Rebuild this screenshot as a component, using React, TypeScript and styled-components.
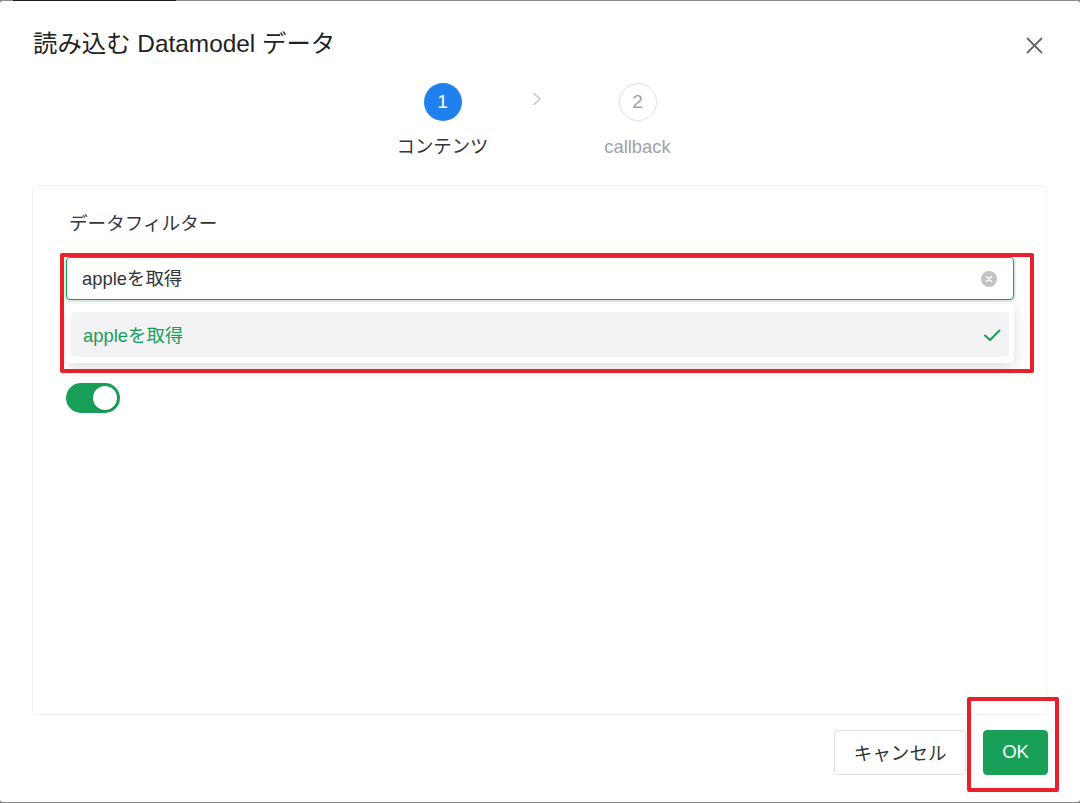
import React from "react";
import styled, { createGlobalStyle } from "styled-components";

const GlobalStyle = createGlobalStyle`
  html, body {
    margin: 0;
    padding: 0;
    background: #8c8c8c;
  }
  body {
    font-family: "Liberation Sans", "Noto Sans CJK JP", sans-serif;
    color: #333639;
  }
  * { box-sizing: border-box; }
`;

const Page = styled.div`
  width: 1080px;
  height: 803px;
  display: flex;
  flex-direction: column;
  overflow: hidden;
`;

const EdgeStrip = styled.div`
  height: 1px;
  flex: none;
  display: flex;
  background: #8c8c8c;
`;

const EdgeDark = styled.div<{ $left: number; $width: number }>`
  margin-left: ${(p) => p.$left}px;
  width: ${(p) => p.$width}px;
  background: #1d1d24;
`;

const Dialog = styled.div`
  position: relative;
  height: 801px;
  flex: none;
  background: #ffffff;
  border-radius: 3px;
  display: flex;
  flex-direction: column;
`;

const Header = styled.div`
  display: flex;
  align-items: center;
  justify-content: space-between;
  padding: 27px 37px 0 33px;
`;

const Title = styled.div`
  font-size: 24.4px;
  line-height: 31px;
  color: #1f2225;
`;

const CloseButton = styled.div`
  width: 18px;
  height: 18px;
  display: flex;
  align-items: center;
  justify-content: center;
  margin-top: 3px;
`;

const Steps = styled.div`
  display: flex;
  justify-content: center;
  margin-top: 24px;
`;

const Step = styled.div`
  width: 120px;
  display: flex;
  flex-direction: column;
  align-items: center;
`;

const StepCircle = styled.div<{ $active?: boolean }>`
  width: 38px;
  height: 38px;
  border-radius: 50%;
  display: flex;
  align-items: center;
  justify-content: center;
  font-size: 19px;
  background: ${(p) => (p.$active ? "#2080f0" : "#ffffff")};
  color: ${(p) => (p.$active ? "#ffffff" : "#9ea1a6")};
  border: ${(p) => (p.$active ? "none" : "1px solid #e0e0e6")};
`;

const StepLabel = styled.div<{ $active?: boolean }>`
  margin-top: 14px;
  font-size: 18.4px;
  line-height: 24px;
  color: ${(p) => (p.$active ? "#333639" : "#a0a3a8")};
`;

const StepSeparator = styled.div`
  width: 75px;
  height: 38px;
  display: flex;
  justify-content: center;
  align-items: flex-start;
  padding-top: 9px;
  padding-right: 6px;
`;

const Card = styled.div`
  flex: 1;
  margin: 26px 33px 0 32px;
  border: 1px solid #efeff5;
  border-radius: 4px;
  padding: 25px 32px 0 33px;
  display: flex;
  flex-direction: column;
`;

const FieldLabel = styled.div`
  font-size: 18.6px;
  line-height: 26px;
  padding-left: 3px;
  color: #333639;
`;

const SelectWrap = styled.div`
  position: relative;
  margin-top: 20px;
`;

const SelectInput = styled.div`
  height: 43px;
  border: 1px solid #18a058;
  border-radius: 4px;
  box-shadow: 0 0 0 2px rgba(24, 160, 88, 0.16);
  display: flex;
  align-items: center;
  justify-content: space-between;
  padding: 0 16px 3px 15px;
  font-size: 18.4px;
  color: #333639;
`;

const ClearIcon = styled.div`
  width: 16px;
  height: 16px;
  border-radius: 50%;
  background: #c2c2c2;
  display: flex;
  align-items: center;
  justify-content: center;
  margin-top: 3px;
`;

const Dropdown = styled.div`
  position: absolute;
  left: 0;
  right: 0;
  top: 47px;
  background: #ffffff;
  border-radius: 4px;
  padding: 8px 5px 6px 5px;
  box-shadow: 0 3px 14px rgba(0, 0, 0, 0.1), 0 6px 24px rgba(0, 0, 0, 0.05);
  z-index: 2;
`;

const Option = styled.div<{ $selected?: boolean }>`
  height: 45px;
  border-radius: 4px;
  background: #f3f3f5;
  display: flex;
  align-items: center;
  justify-content: space-between;
  padding: 0 7px 2px 12px;
  font-size: 18.4px;
  color: ${(p) => (p.$selected ? "#18a058" : "#333639")};
  svg { margin-top: 2px; }
`;

const SwitchRow = styled.div`
  margin-top: 83px;
  display: flex;
`;

const SwitchRail = styled.div<{ $on?: boolean }>`
  width: 54px;
  height: 30px;
  border-radius: 15px;
  background: ${(p) => (p.$on ? "#18a058" : "#dbdbdb")};
  display: flex;
  align-items: center;
  justify-content: ${(p) => (p.$on ? "flex-end" : "flex-start")};
  padding: 0 3px;
`;

const SwitchKnob = styled.div`
  width: 24px;
  height: 24px;
  border-radius: 50%;
  background: #ffffff;
  box-shadow: 0 1px 3px rgba(0, 0, 0, 0.2);
`;

const Footer = styled.div`
  display: flex;
  justify-content: flex-end;
  gap: 17px;
  padding: 15px 32px 27px 0;
`;

const Button = styled.div<{ $primary?: boolean }>`
  height: 45px;
  padding: 0 ${(p) => (p.$primary ? "18px" : "18.5px")} 2px;
  border-radius: 4px;
  display: flex;
  align-items: center;
  justify-content: center;
  font-size: 18.6px;
  background: ${(p) => (p.$primary ? "#18a058" : "#ffffff")};
  color: ${(p) => (p.$primary ? "#ffffff" : "#333639")};
  border: 1px solid ${(p) => (p.$primary ? "#18a058" : "#e0e0e6")};
`;

const Annotation = styled.div`
  position: absolute;
  border: 4px solid #e8202b;
  border-radius: 2px;
  pointer-events: none;
  z-index: 5;
`;

export default function App() {
  return (
    <Page>
      <GlobalStyle />
      <EdgeStrip>
        <EdgeDark $left={13} $width={163} />
      </EdgeStrip>
      <Dialog>
        <Header>
          <Title>読み込む Datamodel データ</Title>
          <CloseButton>
            <svg width="17" height="17" viewBox="0 0 17 17">
              <path d="M1.5 1.5 L15.5 15.5 M15.5 1.5 L1.5 15.5" stroke="#666" strokeWidth="1.8" strokeLinecap="round" />
            </svg>
          </CloseButton>
        </Header>
        <Steps>
          <Step>
            <StepCircle $active>1</StepCircle>
            <StepLabel $active>コンテンツ</StepLabel>
          </Step>
          <StepSeparator>
            <svg width="10" height="14" viewBox="0 0 10 14">
              <path d="M2 1.5 L8 7 L2 12.5" stroke="#c4c5c8" strokeWidth="1.6" fill="none" strokeLinecap="round" strokeLinejoin="round" />
            </svg>
          </StepSeparator>
          <Step>
            <StepCircle>2</StepCircle>
            <StepLabel>callback</StepLabel>
          </Step>
        </Steps>
        <Card>
          <FieldLabel>データフィルター</FieldLabel>
          <SelectWrap>
            <SelectInput>
              <span>appleを取得</span>
              <ClearIcon>
                <svg width="8" height="8" viewBox="0 0 8 8">
                  <path d="M1.5 1.5 L6.5 6.5 M6.5 1.5 L1.5 6.5" stroke="#fff" strokeWidth="1.5" strokeLinecap="round" />
                </svg>
              </ClearIcon>
            </SelectInput>
            <Dropdown>
              <Option $selected>
                <span>appleを取得</span>
                <svg width="20" height="20" viewBox="0 0 20 20">
                  <path d="M3 10.5 L8 15 L17.5 5.5" stroke="#18a058" strokeWidth="2" fill="none" strokeLinecap="round" strokeLinejoin="round" />
                </svg>
              </Option>
            </Dropdown>
          </SelectWrap>
          <SwitchRow>
            <SwitchRail $on>
              <SwitchKnob />
            </SwitchRail>
          </SwitchRow>
        </Card>
        <Footer>
          <Button>キャンセル</Button>
          <Button $primary>OK</Button>
        </Footer>
        <Annotation style={{ left: 60, top: 252, width: 974, height: 120 }} />
        <Annotation style={{ left: 967, top: 696, width: 92, height: 95 }} />
      </Dialog>
      <EdgeStrip />
    </Page>
  );
}
